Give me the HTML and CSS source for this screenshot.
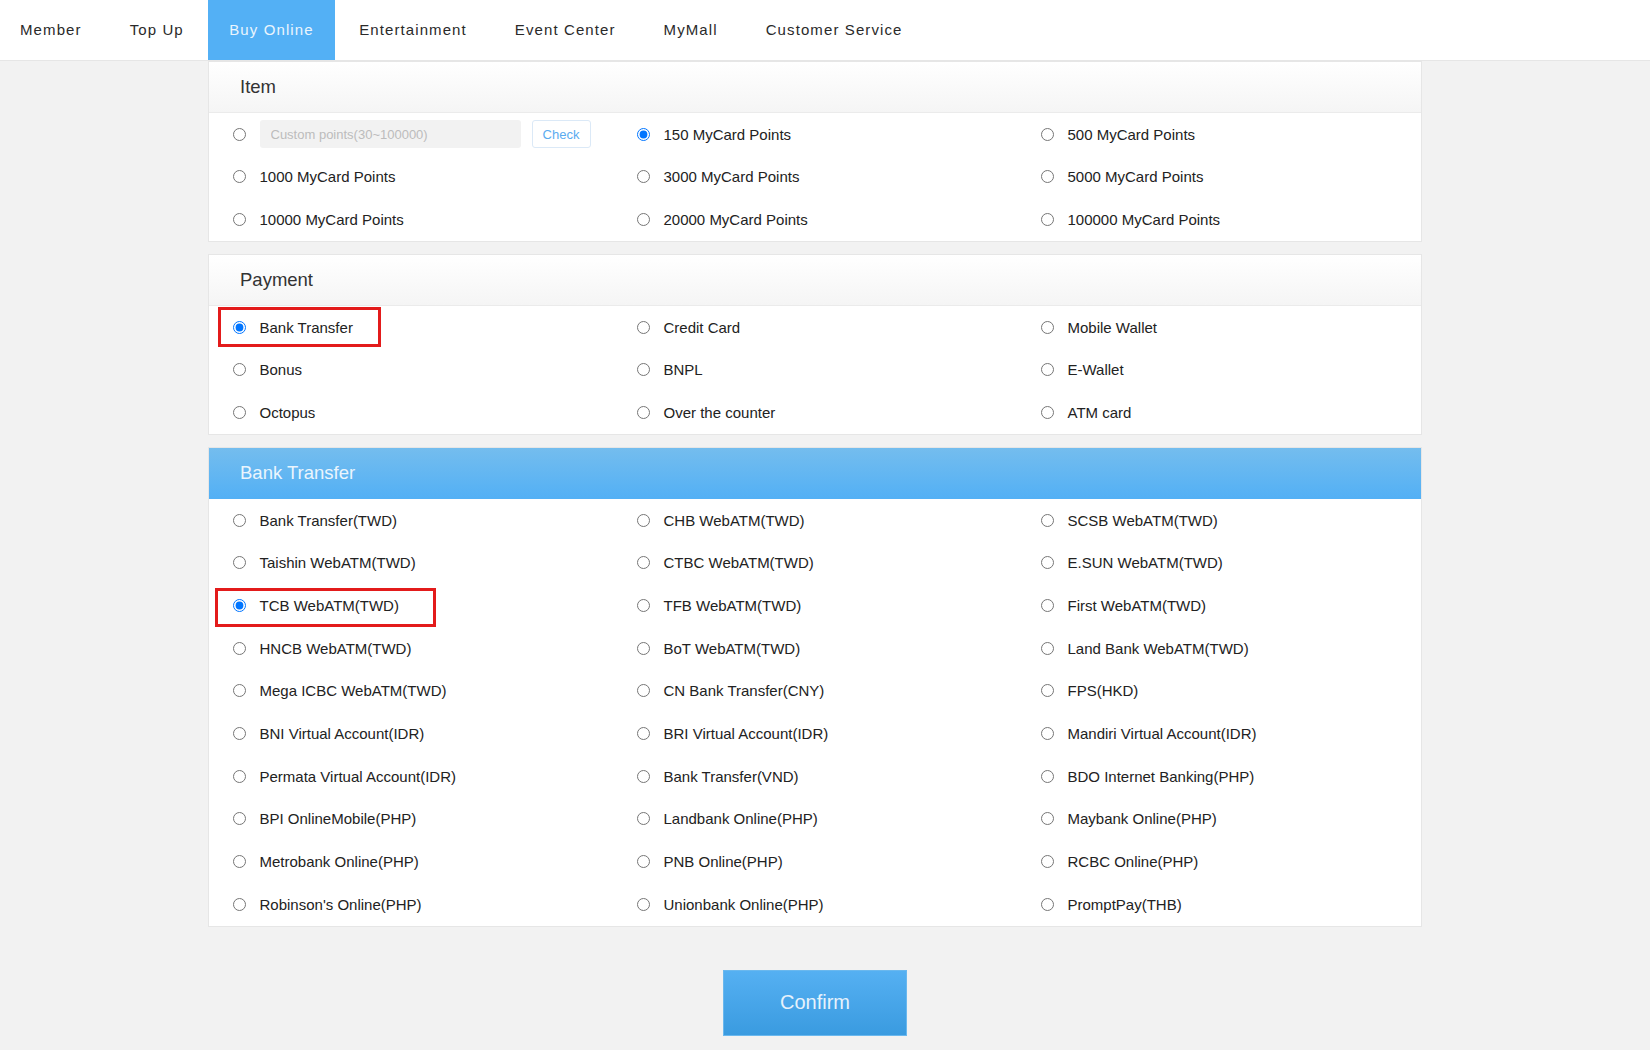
FILE: index.html
```html
<!DOCTYPE html>
<html lang="en">
<head>
  <meta charset="UTF-8">
  <meta name="viewport" content="width=device-width">
  <title>Buy Online</title>
  <link rel="stylesheet" href="styles.css">
</head>
<body>
  <nav class="nav">
    <a href="#">Member</a>
    <a href="#">Top Up</a>
    <a href="#" class="active">Buy Online</a>
    <a href="#">Entertainment</a>
    <a href="#">Event Center</a>
    <a href="#">MyMall</a>
    <a href="#">Customer Service</a>
  </nav>

  <form class="main" autocomplete="off">
    <section class="panel">
      <div class="panel-head">Item</div>
      <div class="panel-body">
        <label class="opt">
          <input type="radio" name="item">
          <input class="custom" type="text" placeholder="Custom points(30~100000)">
          <button type="button" class="check">Check</button>
        </label>
        <label class="opt"><input type="radio" name="item" checked><span>150 MyCard Points</span></label>
        <label class="opt"><input type="radio" name="item"><span>500 MyCard Points</span></label>
        <label class="opt"><input type="radio" name="item"><span>1000 MyCard Points</span></label>
        <label class="opt"><input type="radio" name="item"><span>3000 MyCard Points</span></label>
        <label class="opt"><input type="radio" name="item"><span>5000 MyCard Points</span></label>
        <label class="opt"><input type="radio" name="item"><span>10000 MyCard Points</span></label>
        <label class="opt"><input type="radio" name="item"><span>20000 MyCard Points</span></label>
        <label class="opt"><input type="radio" name="item"><span>100000 MyCard Points</span></label>
      </div>
    </section>

    <section class="panel">
      <div class="panel-head">Payment</div>
      <div class="panel-body">
        <label class="opt"><span class="mark mark-pay"><input type="radio" name="pay" checked><span>Bank Transfer</span></span></label>
        <label class="opt"><input type="radio" name="pay"><span>Credit Card</span></label>
        <label class="opt"><input type="radio" name="pay"><span>Mobile Wallet</span></label>
        <label class="opt"><input type="radio" name="pay"><span>Bonus</span></label>
        <label class="opt"><input type="radio" name="pay"><span>BNPL</span></label>
        <label class="opt"><input type="radio" name="pay"><span>E-Wallet</span></label>
        <label class="opt"><input type="radio" name="pay"><span>Octopus</span></label>
        <label class="opt"><input type="radio" name="pay"><span>Over the counter</span></label>
        <label class="opt"><input type="radio" name="pay"><span>ATM card</span></label>
      </div>
    </section>

    <section class="panel">
      <div class="panel-head blue">Bank Transfer</div>
      <div class="panel-body">
        <label class="opt"><input type="radio" name="bank"><span>Bank Transfer(TWD)</span></label>
        <label class="opt"><input type="radio" name="bank"><span>CHB WebATM(TWD)</span></label>
        <label class="opt"><input type="radio" name="bank"><span>SCSB WebATM(TWD)</span></label>
        <label class="opt"><input type="radio" name="bank"><span>Taishin WebATM(TWD)</span></label>
        <label class="opt"><input type="radio" name="bank"><span>CTBC WebATM(TWD)</span></label>
        <label class="opt"><input type="radio" name="bank"><span>E.SUN WebATM(TWD)</span></label>
        <label class="opt"><span class="mark mark-bank"><input type="radio" name="bank" checked><span>TCB WebATM(TWD)</span></span></label>
        <label class="opt"><input type="radio" name="bank"><span>TFB WebATM(TWD)</span></label>
        <label class="opt"><input type="radio" name="bank"><span>First WebATM(TWD)</span></label>
        <label class="opt"><input type="radio" name="bank"><span>HNCB WebATM(TWD)</span></label>
        <label class="opt"><input type="radio" name="bank"><span>BoT WebATM(TWD)</span></label>
        <label class="opt"><input type="radio" name="bank"><span>Land Bank WebATM(TWD)</span></label>
        <label class="opt"><input type="radio" name="bank"><span>Mega ICBC WebATM(TWD)</span></label>
        <label class="opt"><input type="radio" name="bank"><span>CN Bank Transfer(CNY)</span></label>
        <label class="opt"><input type="radio" name="bank"><span>FPS(HKD)</span></label>
        <label class="opt"><input type="radio" name="bank"><span>BNI Virtual Account(IDR)</span></label>
        <label class="opt"><input type="radio" name="bank"><span>BRI Virtual Account(IDR)</span></label>
        <label class="opt"><input type="radio" name="bank"><span>Mandiri Virtual Account(IDR)</span></label>
        <label class="opt"><input type="radio" name="bank"><span>Permata Virtual Account(IDR)</span></label>
        <label class="opt"><input type="radio" name="bank"><span>Bank Transfer(VND)</span></label>
        <label class="opt"><input type="radio" name="bank"><span>BDO Internet Banking(PHP)</span></label>
        <label class="opt"><input type="radio" name="bank"><span>BPI OnlineMobile(PHP)</span></label>
        <label class="opt"><input type="radio" name="bank"><span>Landbank Online(PHP)</span></label>
        <label class="opt"><input type="radio" name="bank"><span>Maybank Online(PHP)</span></label>
        <label class="opt"><input type="radio" name="bank"><span>Metrobank Online(PHP)</span></label>
        <label class="opt"><input type="radio" name="bank"><span>PNB Online(PHP)</span></label>
        <label class="opt"><input type="radio" name="bank"><span>RCBC Online(PHP)</span></label>
        <label class="opt"><input type="radio" name="bank"><span>Robinson's Online(PHP)</span></label>
        <label class="opt"><input type="radio" name="bank"><span>Unionbank Online(PHP)</span></label>
        <label class="opt"><input type="radio" name="bank"><span>PromptPay(THB)</span></label>
      </div>
    </section>

    <button type="submit" class="confirm">Confirm</button>
  </form>
</body>
</html>
```

FILE: styles.css
```css
body {
  margin: 0;
  background: #f2f2f2;
  font-family: "Liberation Sans", Arial, sans-serif;
  color: #222;
}
.nav {
  display: flex;
  height: 60px;
  background: #fff;
  border-bottom: 1px solid #e6e6e6;
}
.nav a {
  display: block;
  padding: 0 24px;
  line-height: 60px;
  font-size: 15px;
  letter-spacing: 1.1px;
  color: #2a2a2a;
  text-decoration: none;
}
.nav a:first-child {
  padding-left: 20px;
}
.nav a.active {
  padding: 0 21.5px;
  background: #53b0f5;
  color: #eaf5fd;
}
.main {
  width: 1214px;
  margin-left: 208px;
  padding-bottom: 15px;
}
.panel {
  background: #fff;
  border: 1px solid #e6e6e6;
  margin-bottom: 12px;
}
.panel-head {
  height: 50px;
  line-height: 50px;
  padding-left: 31px;
  font-size: 18.5px;
  color: #333;
  background: linear-gradient(#fff, #f5f5f5);
  border-bottom: 1px solid #ebebeb;
}
.panel-head.blue {
  background: linear-gradient(#74bdee, #53b0f5);
  color: #eaf5fd;
  border-bottom-color: #53b0f5;
}
.panel-body {
  display: grid;
  grid-template-columns: repeat(3, 1fr);
}
.opt {
  display: flex;
  align-items: center;
  height: 42.67px;
  padding-left: 24px;
  font-size: 15px;
}
.opt input[type=radio] {
  width: 13px;
  height: 13px;
  margin: 0 13.5px 0 0;
  flex: none;
}
.custom {
  width: 261px;
  height: 28px;
  box-sizing: border-box;
  border: none;
  border-radius: 3px;
  background: #f2f2f2;
  padding-left: 11px;
  font-family: inherit;
  font-size: 13px;
}
.custom::placeholder {
  color: #bcbcbc;
}
.check {
  width: 59px;
  height: 28px;
  margin-left: 11px;
  background: #fff;
  border: 1px solid #dbe9f7;
  border-radius: 3px;
  color: #5aabf0;
  font-family: inherit;
  font-size: 13px;
}
.mark {
  position: relative;
  display: flex;
  align-items: center;
}
.mark::after {
  content: "";
  position: absolute;
  border: 3px solid #e31b1b;
}
.mark-pay::after {
  left: -15.5px;
  right: -28px;
  top: -11.5px;
  bottom: -11.5px;
}
.mark-bank::after {
  left: -18px;
  right: -37px;
  top: -9.5px;
  bottom: -12.5px;
}
.confirm {
  display: block;
  width: 184px;
  height: 66px;
  margin: 43px auto 0;
  background: linear-gradient(#55b0f2, #3a9be0);
  border: 1px solid #6ab8ee;
  color: #e6f2fc;
  font-family: inherit;
  font-size: 20px;
}
```
